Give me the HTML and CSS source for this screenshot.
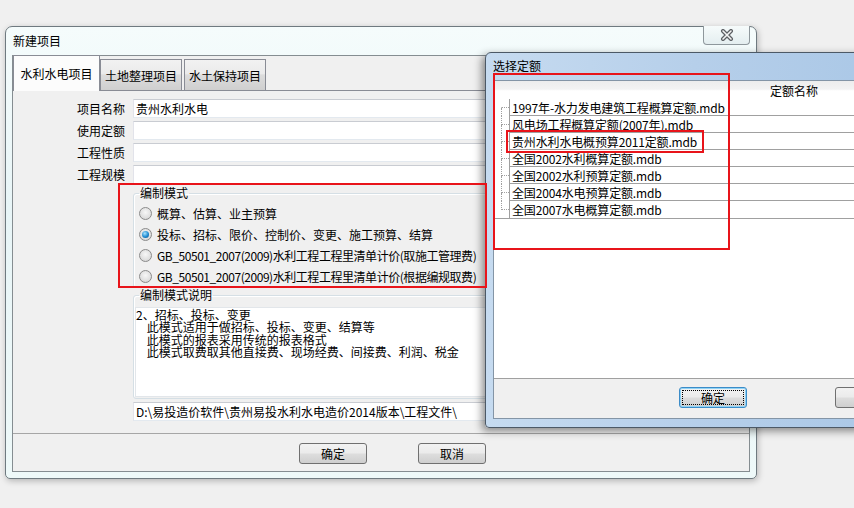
FILE: index.html
```html
<!doctype html>
<html>
<head>
    <meta charset="utf-8">
    <title>新建项目</title>
    <link rel="stylesheet" href="styles.css">
</head>
<body>
<div class="desk">
    <div class="win win-main">
        <div class="titlebar">
            新建项目
            <span class="close">
                <svg width="14" height="12" viewBox="0 0 14 12">
                    <path d="M3 2 L11 10 M11 2 L3 10" stroke="#5c5f63" stroke-width="4" stroke-linecap="round"/>
                    <path d="M3 2 L11 10 M11 2 L3 10" stroke="#f4f4f4" stroke-width="1.6" stroke-linecap="round"/>
                </svg>
            </span>
        </div>
        <div class="client">
            <div class="tabs">
                <div class="tab active">水利水电项目</div>
                <div class="tab">土地整理项目</div>
                <div class="tab">水土保持项目</div>
            </div>
            <div class="panel">
                <div class="form">
                    <label>项目名称</label><div class="field">贵州水利水电</div>
                    <label>使用定额</label><div class="field"></div>
                    <label>工程性质</label><div class="field"></div>
                    <label>工程规模</label><div class="field"></div>
                </div>
                <fieldset class="group mode">
                    <legend>编制模式</legend>
                    <div class="opt"><span class="radio"></span>概算、估算、业主预算</div>
                    <div class="opt"><span class="radio on"></span>投标、招标、限价、控制价、变更、施工预算、结算</div>
                    <div class="opt narrow"><span class="radio"></span>GB_50501_2007(2009)水利工程工程里清单计价(取施工管理费)</div>
                    <div class="opt narrow"><span class="radio"></span>GB_50501_2007(2009)水利工程工程里清单计价(根据编规取费)</div>
                </fieldset>
                <fieldset class="group desc">
                    <legend>编制模式说明</legend>
                    <div class="memo">2、招标、投标、变更
    此模式适用于做招标、投标、变更、结算等
    此模式的报表采用传统的报表格式
    此模式取费取其他直接费、现场经费、间接费、利润、税金</div>
                </fieldset>
                <div class="field path">D:\易投造价软件\贵州易投水利水电造价2014版本\工程文件\</div>
            </div>
            <div class="footer">
                <button class="btn">确定</button>
                <button class="btn">取消</button>
            </div>
        </div>
    </div>

    <div class="win win-pick">
        <div class="titlebar">选择定额</div>
        <div class="client2">
            <div class="grid">
                <div class="grid-head">定额名称</div>
                <div class="row first"><div class="tree"><i></i><i></i></div><div class="cell">1997年-水力发电建筑工程概算定额.mdb</div></div>
                <div class="row"><div class="tree"><i></i><i></i></div><div class="cell">风电场工程概算定额(2007年).mdb</div></div>
                <div class="row"><div class="tree"><i></i><i></i></div><div class="cell">贵州水利水电概预算2011定额.mdb</div></div>
                <div class="row"><div class="tree"><i></i><i></i></div><div class="cell">全国2002水利概算定额.mdb</div></div>
                <div class="row"><div class="tree"><i></i><i></i></div><div class="cell">全国2002水利预算定额.mdb</div></div>
                <div class="row"><div class="tree"><i></i><i></i></div><div class="cell">全国2004水电预算定额.mdb</div></div>
                <div class="row last"><div class="tree"><i></i><i></i></div><div class="cell">全国2007水电概算定额.mdb</div></div>
            </div>
            <div class="bar">
                <button class="btn focus">确定</button>
                <button class="btn"></button>
            </div>
        </div>
    </div>

    <div class="mark mark-mode"></div>
    <div class="mark mark-list"></div>
    <div class="mark mark-row"></div>
</div>
</body>
</html>
```

FILE: styles.css
```css
html, body {
    margin: 0;
    padding: 0;
}

body {
    background-color: #f0f0f0;
    font-family: "Noto Sans CJK SC", sans-serif;
    font-size: 12px;
    color: #000;
}

.desk {
    position: relative;
    width: 854px;
    height: 508px;
    overflow: hidden;
}

.win {
    position: absolute;
    box-sizing: border-box;
    display: flex;
    flex-direction: column;
}

/* main dialog */
.win-main {
    left: 5px;
    top: 26px;
    width: 752px;
    height: 453px;
    border: 1px solid #6f7a80;
    border-radius: 7px 7px 5px 5px;
    background: linear-gradient(180deg, #f5fcfc 0%, #e8f5f7 40%, #eef9f9 100%);
    box-shadow: 1px 2px 6px rgba(0, 0, 0, 0.25);
}

.titlebar {
    position: relative;
    height: 28px;
    line-height: 28px;
    padding-left: 7px;
    flex: none;
}

.close {
    position: absolute;
    top: -1px;
    right: 6px;
    width: 47px;
    height: 19px;
    box-sizing: border-box;
    border: 1px solid #8e979c;
    border-top: none;
    border-radius: 0 0 4px 4px;
    background: linear-gradient(180deg, #f6fbfb, #e4eef0);
    display: flex;
    align-items: center;
    justify-content: center;
}

.client {
    flex: 1;
    margin: 0 6px 6px 6px;
    background-color: #f0f0f0;
    border: 1px solid #858d91;
    display: flex;
    flex-direction: column;
    min-height: 0;
}

.tabs {
    display: flex;
    align-items: flex-end;
    height: 34px;
    border-bottom: 1px solid #898c95;
    flex: none;
}

.tab {
    box-sizing: border-box;
    height: 31px;
    width: 82px;
    line-height: 31px;
    text-align: center;
    border: 1px solid #898c95;
    border-bottom: none;
    background: linear-gradient(180deg, #f2f2f2 0%, #ebebeb 45%, #dcdcdc 50%, #cfcfcf 100%);
}

.tab + .tab {
    margin-left: 2px;
}

.tab.active {
    width: 87px;
    height: 36px;
    margin-bottom: -1px;
    line-height: 36px;
    background: #fcfcfc;
}

.tab.active + .tab {
    margin-left: 0;
}

.panel {
    flex: 1;
    padding-top: 8px;
    overflow: hidden;
}

.form {
    display: grid;
    grid-template-columns: 113px 612px;
    grid-auto-rows: 19px;
    column-gap: 7px;
    row-gap: 3px;
}

.form label {
    text-align: right;
    line-height: 19px;
    padding-right: 1px;
}

.field {
    box-sizing: border-box;
    height: 19px;
    line-height: 17px;
    padding-left: 2px;
    background-color: #fff;
    border: 1px solid;
    border-color: #c9ccd2 #e3e9ef #e3e9ef #e2e3ea;
    white-space: nowrap;
}

.group {
    margin: 2px 0 0 120px;
    width: 620px;
    border: 1px solid #d5dfe5;
    border-radius: 3px;
    box-shadow: inset 1px 1px #fff;
    min-width: 0;
}

.group legend {
    padding: 0 1px;
    line-height: 14px;
}

.mode {
    padding: 3px 0 0 5px;
}

.opt {
    display: flex;
    align-items: center;
    height: 21px;
    white-space: nowrap;
}

.opt.narrow {
    letter-spacing: -0.45px;
}

.radio {
    box-sizing: border-box;
    width: 13px;
    height: 13px;
    margin-right: 5px;
    border-radius: 50%;
    border: 1px solid #8a8a8a;
    background: radial-gradient(circle at 50% 40%, #f7f7f7 0%, #dcdcdc 70%, #cfcfcf 100%);
    display: flex;
    align-items: center;
    justify-content: center;
}

.radio.on::after {
    content: "";
    width: 7px;
    height: 7px;
    border-radius: 50%;
    background: radial-gradient(circle at 40% 35%, #a6e3ff 0%, #1f8ad0 55%, #0c4c86 100%);
}

.desc {
    margin-top: 0;
    padding: 5px 0 1px 1px;
}

.desc legend {
    margin-left: 4px;
}

.memo {
    box-sizing: border-box;
    height: 90px;
    width: 360px;
    padding: 1px 0 0 0;
    background-color: #fff;
    border: 1px solid #e2e6ea;
    line-height: 12.3px;
    white-space: pre;
}

.path {
    margin: 3px 0 0 120px;
    width: 620px;
}

.footer {
    flex: none;
    height: 38px;
    border-top: 1px solid #a6a6a6;
    padding: 9px 0 0 286px;
    box-sizing: border-box;
    display: flex;
    gap: 51px;
}

.btn {
    box-sizing: border-box;
    width: 68px;
    height: 21px;
    padding: 0;
    font: inherit;
    color: #000;
    border: 1px solid #707070;
    border-radius: 3px;
    background: linear-gradient(180deg, #f2f2f2 0%, #ebebeb 48%, #dddddd 52%, #cfcfcf 100%);
}

/* pick dialog */
.win-pick {
    left: 485px;
    top: 52px;
    width: 420px;
    height: 376px;
    border: 1px solid #4c5966;
    border-radius: 6px 0 0 4px;
    background: linear-gradient(90deg, #c6dbf0 0%, #b6cfea 50%, #a9c7e6 100%);
    box-shadow: -3px 3px 8px rgba(0, 0, 0, 0.45);
}

.win-pick .titlebar {
    height: 27px;
    line-height: 26px;
}

.client2 {
    flex: 1;
    margin: 0 0 8px 7px;
    border: 1px solid #8495a6;
    background-color: #f0f0f0;
    display: flex;
    flex-direction: column;
    min-height: 0;
}

.grid {
    flex: 1;
    background-color: #fff;
}

.grid-head {
    height: 18px;
    line-height: 20px;
    padding-left: 276px;
    background: linear-gradient(180deg, #ededed 0%, #f3f3f3 45%, #fff 55%, #fff 100%);
}

.row {
    display: flex;
    height: 17px;
}

.tree {
    width: 15px;
    flex: none;
    display: flex;
    flex-direction: column;
}

.tree i {
    margin-left: 7px;
    border-left: 1px dotted #a0a0a0;
}

.tree i:first-child {
    height: 8px;
    border-bottom: 1px dotted #a0a0a0;
}

.tree i:last-child {
    flex: 1;
}

.row.first .tree i:first-child {
    border-left-color: transparent;
}

.row.last .tree i:last-child {
    border-left-color: transparent;
}

.cell {
    flex: 1;
    box-sizing: border-box;
    padding-left: 2px;
    line-height: 17px;
    letter-spacing: -0.15px;
    border-left: 1px solid #a0a0a0;
    border-bottom: 1px solid #a0a0a0;
    white-space: nowrap;
}

.row.last {
    border-bottom: 1px solid #a0a0a0;
}

.row.last .cell {
    border-bottom: none;
}

.bar {
    flex: none;
    height: 40px;
    box-sizing: border-box;
    border-top: 1px solid #a0a0a0;
    padding: 8px 0 0 185px;
    display: flex;
    gap: 88px;
}

.bar .btn {
    width: 71px;
}

.btn.focus {
    border-color: #3c8cc8;
    box-shadow: inset 0 0 0 1px #8fd3f6;
    outline: 1px dotted #000;
    outline-offset: -4px;
}

/* red annotation boxes */
.mark {
    position: absolute;
    box-sizing: border-box;
    border: 2px solid #e8141a;
    pointer-events: none;
}

.mark-mode {
    left: 118px;
    top: 183px;
    width: 369px;
    height: 105px;
}

.mark-list {
    left: 493px;
    top: 73px;
    width: 237px;
    height: 177px;
}

.mark-row {
    left: 506px;
    top: 130px;
    width: 198px;
    height: 23px;
}
```
